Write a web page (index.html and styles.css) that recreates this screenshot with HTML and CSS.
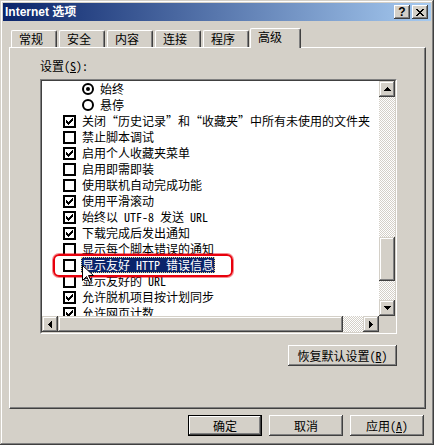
FILE: index.html
```html
<!DOCTYPE html>
<html lang="zh-CN">
<head>
    <meta charset="UTF-8">
    <meta name="viewport" content="width=device-width, initial-scale=1.0">
    <title>Internet 选项</title>
    <link rel="stylesheet" href="styles.css">
</head>
<body>
    <div class="window">
        <div class="titlebar">
            <span class="title">Internet 选项</span>
            <div class="caption-buttons">
                <div class="cap-btn help">?</div>
                <div class="cap-btn">
                    <svg width="8" height="7" viewBox="0 0 8 7"><path d="M0 0h2v1h1v1h2v-1h1v-1h2v1h-1v1h-1v1h-1v1h1v1h1v1h1v1h-2v-1h-1v-1h-2v1h-1v1h-2v-1h1v-1h1v-1h1v-1h-1v-1h-1v-1h-1z"/></svg>
                </div>
            </div>
        </div>

        <div class="content">
            <div class="tabs">
                <div class="tab">常规</div>
                <div class="tab">安全</div>
                <div class="tab">内容</div>
                <div class="tab">连接</div>
                <div class="tab">程序</div>
                <div class="tab active">高级</div>
            </div>

            <div class="panel">
                <div class="label">设置(<u>S</u>):</div>

                <div class="listbox">
                    <div class="listbox-inner">
                        <div class="rows">
                            <div class="item sub"><span class="radio on"></span><span class="text">始终</span></div>
                            <div class="item sub"><span class="radio"></span><span class="text">悬停</span></div>
                            <div class="item"><span class="box on"></span><span class="text">关闭“历史记录”和“收藏夹”中所有未使用的文件夹</span></div>
                            <div class="item"><span class="box"></span><span class="text">禁止脚本调试</span></div>
                            <div class="item"><span class="box on"></span><span class="text">启用个人收藏夹菜单</span></div>
                            <div class="item"><span class="box"></span><span class="text">启用即需即装</span></div>
                            <div class="item"><span class="box"></span><span class="text">使用联机自动完成功能</span></div>
                            <div class="item"><span class="box on"></span><span class="text">使用平滑滚动</span></div>
                            <div class="item"><span class="box on"></span><span class="text">始终以 UTF-8 发送 URL</span></div>
                            <div class="item"><span class="box on"></span><span class="text">下载完成后发出通知</span></div>
                            <div class="item"><span class="box"></span><span class="text">显示每个脚本错误的通知</span></div>
                            <div class="item selected"><span class="box"></span><span class="text">显示友好 HTTP 错误信息</span></div>
                            <div class="item"><span class="box"></span><span class="text">显示友好的 URL</span></div>
                            <div class="item"><span class="box on"></span><span class="text">允许脱机项目按计划同步</span></div>
                            <div class="item"><span class="box on"></span><span class="text">允许网页计数</span></div>

                            <!-- annotation + mouse pointer drawn over the list -->
                            <div class="mark"></div>
                            <svg class="pointer" width="12" height="19" viewBox="0 0 12 19"><path d="M0.5 0.5V15.5L4.5 11.5L7.5 17.5L9.5 16.5L6.5 10.5H11.5Z"/></svg>
                        </div>

                        <div class="vscroll">
                            <div class="sbtn"><svg width="7" height="4" viewBox="0 0 7 4"><path d="M3 0h1v1h1v1h1v1h1v1H0v-1h1v-1h1v-1h1z"/></svg></div>
                            <div class="track grow"></div>
                            <div class="thumb v"></div>
                            <div class="track rest-v"></div>
                            <div class="sbtn"><svg width="7" height="4" viewBox="0 0 7 4"><path d="M0 0h7v1h-1v1h-1v1h-1v1h-1v-1h-1v-1h-1v-1h-1z"/></svg></div>
                        </div>

                        <div class="hscroll">
                            <div class="sbtn"><svg width="4" height="7" viewBox="0 0 4 7"><path d="M3 0h1v7h-1v-1h-1v-1h-1v-1h-1v-1h1v-1h1v-1h1z"/></svg></div>
                            <div class="thumb h"></div>
                            <div class="track grow"></div>
                            <div class="sbtn"><svg width="4" height="7" viewBox="0 0 4 7"><path d="M0 0h1v1h1v1h1v1h1v1h-1v1h-1v1h-1v1h-1z"/></svg></div>
                        </div>

                        <div class="corner"></div>
                    </div>
                </div>

                <div class="reset-row">
                    <div class="btn reset">恢复默认设置(<u>R</u>)</div>
                </div>
            </div>

            <div class="footer">
                <div class="btn default">确定</div>
                <div class="btn">取消</div>
                <div class="btn">应用(<u>A</u>)</div>
            </div>
        </div>
    </div>
</body>
</html>
```

FILE: styles.css
```css
* {
    margin: 0;
    padding: 0;
    box-sizing: border-box;
}

body {
    background: #d4d0c8;
    font-family: "Noto Sans Mono CJK SC", "Noto Sans CJK SC", sans-serif;
    font-size: 12px;
    color: #000;
}

u {
    text-decoration: underline;
}

/* window frame */
.window {
    width: 434px;
    height: 445px;
    padding: 3px;
    background: #d4d0c8;
    box-shadow: inset -1px -1px #404040, inset 1px 1px #d4d0c8,
                inset -2px -2px #808080, inset 2px 2px #fff;
}

.titlebar {
    height: 18px;
    display: flex;
    align-items: center;
    justify-content: space-between;
    padding: 0 3px 0 2px;
    background: linear-gradient(to right, #0a246a, #a6caf0);
}

.title {
    color: #fff;
    font-family: "Liberation Sans", "Noto Sans CJK SC", sans-serif;
    font-weight: bold;
    font-size: 12px;
    line-height: 18px;
}

.caption-buttons {
    display: flex;
    gap: 2px;
}

.cap-btn {
    width: 16px;
    height: 14px;
    display: flex;
    align-items: center;
    justify-content: center;
    background: #d4d0c8;
    box-shadow: inset -1px -1px #404040, inset 1px 1px #fff,
                inset -2px -2px #808080, inset 2px 2px #d4d0c8;
}

.cap-btn.help {
    font-family: "Liberation Sans", sans-serif;
    font-weight: bold;
    font-size: 12px;
    line-height: 14px;
    padding-bottom: 1px;
}

.content {
    padding: 0 5px 0 6px;
}

/* tabs */
.tabs {
    display: flex;
    align-items: flex-end;
    margin-top: 7px;
    padding-left: 2px;
    position: relative;
    z-index: 1;
}

.tab {
    width: 46px;
    height: 17px;
    margin-right: 2px;
    padding-left: 7px;
    line-height: 15px;
    border-top: 1px solid #fff;
    border-left: 1px solid #fff;
    border-right: 1px solid #404040;
    border-radius: 2px 2px 0 0;
    box-shadow: inset -1px 0 #808080;
}

.tab.active {
    width: 51px;
    height: 20px;
    margin-left: -1px;
    margin-bottom: -1px;
    line-height: 16px;
    background: #d4d0c8;
}

.panel {
    height: 362px;
    padding-left: 30px;
    border-top: 1px solid #fff;
    border-left: 1px solid #fff;
    border-right: 1px solid #404040;
    border-bottom: 1px solid #404040;
    box-shadow: inset -1px -1px #808080;
}

.label {
    margin-top: 12px;
    height: 12px;
    line-height: 12px;
}

/* list box */
.listbox {
    margin-top: 7px;
    width: 357px;
    height: 255px;
    border: 1px solid;
    border-color: #808080 #fff #fff #808080;
}

.listbox-inner {
    height: 100%;
    border: 1px solid;
    border-color: #404040 #d4d0c8 #d4d0c8 #404040;
    display: grid;
    grid-template-columns: 337px 16px;
    grid-template-rows: 235px 16px;
}

.rows {
    position: relative;
    overflow: hidden;
    background: #fff;
}

.item {
    height: 16px;
    display: flex;
    align-items: center;
    gap: 6px;
    padding-left: 21px;
    line-height: 16px;
    white-space: nowrap;
}

.item.sub {
    padding-left: 40px;
}

.box {
    width: 13px;
    height: 13px;
    flex: none;
    border: 2px solid #000;
    background: #fff;
}

.box.on {
    background: #fff url("data:image/svg+xml,%3Csvg xmlns='http://www.w3.org/2000/svg' width='7' height='7'%3E%3Cpath d='M0 2h1v1h1v1h1v-1h1v-1h1v-1h1v-1h1v3h-1v1h-1v1h-1v1h-1v1h-1v-1h-1v-1h-1z'/%3E%3C/svg%3E") no-repeat 1px 1px;
}

.radio {
    width: 12px;
    height: 12px;
    flex: none;
    border: 2px solid #000;
    border-radius: 50%;
    display: flex;
    align-items: center;
    justify-content: center;
}

.radio.on::after {
    content: "";
    width: 4px;
    height: 4px;
    border-radius: 50%;
    background: #000;
}

.item.selected .text {
    margin-left: -1px;
    padding: 0 1px;
    background: #0a246a;
    color: #fff;
    outline: 1px dotted #e8d48c;
    outline-offset: -1px;
}

.mark {
    position: absolute;
    left: 11px;
    top: 173px;
    width: 180px;
    height: 23px;
    border: 2px solid #e8000c;
    border-radius: 6px;
    box-shadow: 0 0 0 1px rgba(232, 0, 12, 0.45);
}

.pointer {
    position: absolute;
    left: 40px;
    top: 184px;
    fill: #fff;
    stroke: #000;
    stroke-width: 1;
}

/* scroll bars */
.vscroll {
    display: flex;
    flex-direction: column;
}

.hscroll {
    display: flex;
}

.sbtn {
    width: 16px;
    height: 16px;
    flex: none;
    display: flex;
    align-items: center;
    justify-content: center;
    background: #d4d0c8;
    box-shadow: inset -1px -1px #404040, inset 1px 1px #d4d0c8,
                inset -2px -2px #808080, inset 2px 2px #fff;
}

.track {
    background: repeating-conic-gradient(#fff 0 25%, #d4d0c8 0 50%) 0 0 / 2px 2px;
}

.track.grow {
    flex: 1;
}

.track.rest-v {
    height: 19px;
}

.thumb {
    flex: none;
    background: #d4d0c8;
    box-shadow: inset -1px -1px #404040, inset 1px 1px #d4d0c8,
                inset -2px -2px #808080, inset 2px 2px #fff;
}

.thumb.v {
    height: 44px;
}

.thumb.h {
    width: 285px;
}

.corner {
    background: #d4d0c8;
}

/* buttons */
.reset-row {
    width: 357px;
    margin-top: 11px;
    display: flex;
    justify-content: flex-end;
}

.btn {
    width: 74px;
    height: 21px;
    display: flex;
    align-items: center;
    justify-content: center;
    background: #d4d0c8;
    box-shadow: inset -1px -1px #404040, inset 1px 1px #fff,
                inset -2px -2px #808080, inset 2px 2px #d4d0c8;
}

.btn.reset {
    width: 109px;
}

.btn.default {
    border: 1px solid #000;
}

.footer {
    margin-top: 6px;
    padding-right: 2px;
    display: flex;
    justify-content: flex-end;
    gap: 7px;
}
```
